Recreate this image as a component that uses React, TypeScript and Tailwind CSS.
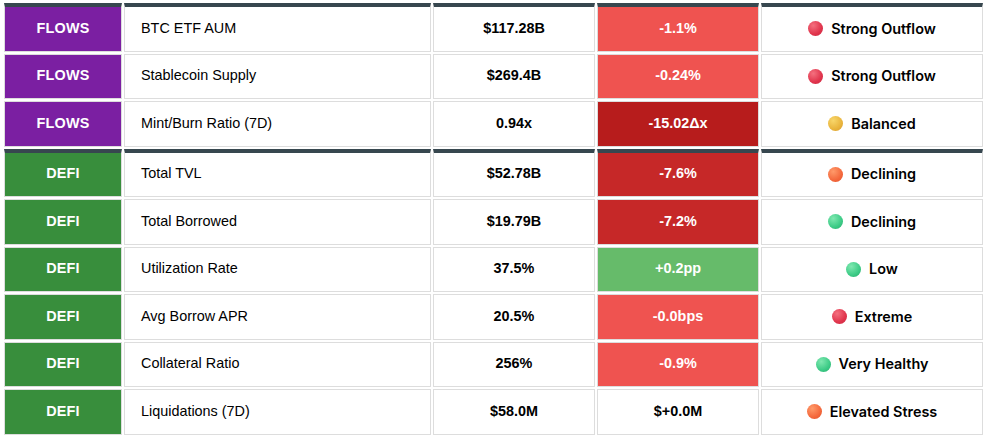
type Tone = 'red' | 'gold' | 'orange' | 'green';

interface Row {
  group: 'FLOWS' | 'DEFI';
  metric: string;
  value: string;
  change: string;
  changeBg: string;
  changeText: string;
  status: string;
  tone: Tone;
  first?: boolean;
}

const rows: Row[] = [
  { group: 'FLOWS', metric: 'BTC ETF AUM', value: '$117.28B', change: '-1.1%', changeBg: 'bg-[#ef5350]', changeText: 'text-white', status: 'Strong Outflow', tone: 'red', first: true },
  { group: 'FLOWS', metric: 'Stablecoin Supply', value: '$269.4B', change: '-0.24%', changeBg: 'bg-[#ef5350]', changeText: 'text-white', status: 'Strong Outflow', tone: 'red' },
  { group: 'FLOWS', metric: 'Mint/Burn Ratio (7D)', value: '0.94x', change: '-15.02Δx', changeBg: 'bg-[#b71c1c]', changeText: 'text-white', status: 'Balanced', tone: 'gold' },
  { group: 'DEFI', metric: 'Total TVL', value: '$52.78B', change: '-7.6%', changeBg: 'bg-[#c62828]', changeText: 'text-white', status: 'Declining', tone: 'orange', first: true },
  { group: 'DEFI', metric: 'Total Borrowed', value: '$19.79B', change: '-7.2%', changeBg: 'bg-[#c62828]', changeText: 'text-white', status: 'Declining', tone: 'green' },
  { group: 'DEFI', metric: 'Utilization Rate', value: '37.5%', change: '+0.2pp', changeBg: 'bg-[#66bb6a]', changeText: 'text-white', status: 'Low', tone: 'green' },
  { group: 'DEFI', metric: 'Avg Borrow APR', value: '20.5%', change: '-0.0bps', changeBg: 'bg-[#ef5350]', changeText: 'text-white', status: 'Extreme', tone: 'red' },
  { group: 'DEFI', metric: 'Collateral Ratio', value: '256%', change: '-0.9%', changeBg: 'bg-[#ef5350]', changeText: 'text-white', status: 'Very Healthy', tone: 'green' },
  { group: 'DEFI', metric: 'Liquidations (7D)', value: '$58.0M', change: '$+0.0M', changeBg: 'bg-white', changeText: 'text-black', status: 'Elevated Stress', tone: 'orange' },
];

const dotClass: Record<Tone, string> = {
  red: 'bg-[radial-gradient(circle_at_35%_30%,#f4707f,#e0344c_60%,#c92a42)]',
  gold: 'bg-[radial-gradient(circle_at_35%_30%,#f8d66a,#e9b43c_60%,#d59a2c)]',
  orange: 'bg-[radial-gradient(circle_at_35%_30%,#ff9a6a,#f4683c_60%,#e0532c)]',
  green: 'bg-[radial-gradient(circle_at_35%_30%,#7fe8b0,#3ccb86_60%,#2aa86c)]',
};

function Cell({ first, className, children }: { first?: boolean; className: string; children: React.ReactNode }) {
  return (
    <div
      className={`flex items-center border border-[#dddddd] ${
        first ? 'h-[48.5px] border-t-4 border-t-[#37474f]' : 'h-[45.5px]'
      } ${className}`}
    >
      {children}
    </div>
  );
}

export default function App() {
  return (
    <div className="w-[988px] h-[444px] bg-white font-['Liberation_Sans',Arial,sans-serif] text-[14.4px] text-black">
      <div className="flex flex-col gap-[2px] pl-[4px] pt-[3px]">
        {rows.map((r, i) => (
          <div key={i} className="flex gap-[2px]">
            <Cell
              first={r.first}
              className={`w-[118px] justify-center font-bold text-white tracking-[0.2px] ${
                r.group === 'FLOWS' ? 'bg-[#7b1fa2]' : 'bg-[#388e3c]'
              }`}
            >
              {r.group}
            </Cell>
            <Cell first={r.first} className="w-[307px] pl-4">
              {r.metric}
            </Cell>
            <Cell first={r.first} className="w-[162px] justify-center font-bold">
              {r.value}
            </Cell>
            <Cell first={r.first} className={`w-[162px] justify-center font-bold ${r.changeBg} ${r.changeText}`}>
              {r.change}
            </Cell>
            <Cell first={r.first} className="w-[222px] justify-center gap-[8px] font-['Inter',sans-serif] font-semibold">
              <span className={`inline-block w-[15px] h-[15px] rounded-full ${dotClass[r.tone]}`} />
              {r.status}
            </Cell>
          </div>
        ))}
      </div>
    </div>
  );
}
